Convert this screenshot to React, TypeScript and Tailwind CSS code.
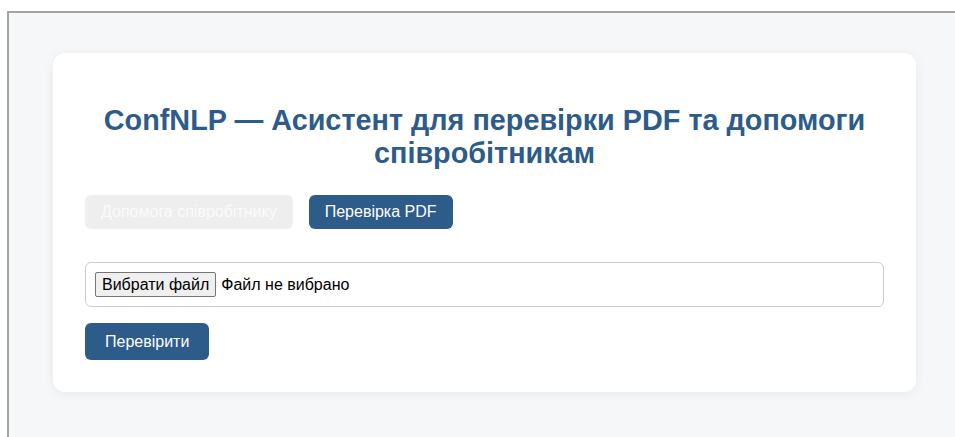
import { useState } from "react";

type Mode = "help" | "pdf";

const font = "font-['Liberation_Sans',Arial,sans-serif]";

function ModeTabs({ mode, onChange }: { mode: Mode; onChange: (m: Mode) => void }) {
    return (
        <div className="flex gap-4">
            <button
                onClick={() => onChange("help")}
                className={
                    mode === "help"
                        ? "h-[34px] px-4 rounded-md bg-[#2d5b8a] text-white text-base leading-[18px]"
                        : "h-[34px] px-4 rounded-md bg-[#eeeeee] text-[#fbfbfb] text-base leading-[18px]"
                }
            >
                Допомога співробітнику
            </button>
            <button
                onClick={() => onChange("pdf")}
                className={
                    mode === "pdf"
                        ? "h-[34px] px-4 rounded-md bg-[#2d5b8a] text-white text-base leading-[18px]"
                        : "h-[34px] px-4 rounded-md bg-[#eeeeee] text-[#fbfbfb] text-base leading-[18px]"
                }
            >
                Перевірка PDF
            </button>
        </div>
    );
}

function FilePicker() {
    // mimics the browser's own file input, with the Ukrainian labels
    return (
        <div className="border border-[#cccccc] rounded-md p-[9px] flex items-center">
            <span className="h-[25px] px-[6px] flex items-center bg-[#efefef] border border-[#767676] rounded-[2px] text-base text-black">
                Вибрати файл
            </span>
            <span className="ml-[5px] text-base text-black">Файл не вибрано</span>
        </div>
    );
}

export default function App() {
    const [mode, setMode] = useState<Mode>("pdf");

    return (
        <div className={`h-screen overflow-hidden bg-white ${font}`}>
            <div className="ml-[7px] mt-[11px] w-[953px] h-[600px] border-l-2 border-t-2 border-[#a3a3a3] bg-[#f6f7f9] pt-[40px]">
                <div className="ml-[44px] w-[863px] bg-white rounded-xl shadow-[0_2px_12px_rgba(0,0,0,0.06)] px-8 pt-[51px] pb-8">
                    <h1 className="text-center text-[28.8px] leading-[33px] font-bold text-[#2d5b8a] px-4">
                        ConfNLP — Асистент для перевірки PDF та допомоги співробітникам
                    </h1>
                    <div className="mt-[25px]">
                        <ModeTabs mode={mode} onChange={setMode} />
                    </div>
                    <div className="mt-[33px]">
                        <FilePicker />
                    </div>
                    <button className="mt-4 h-[37px] px-5 rounded-md bg-[#2d5b8a] text-white text-base">
                        Перевірити
                    </button>
                </div>
            </div>
        </div>
    );
}
